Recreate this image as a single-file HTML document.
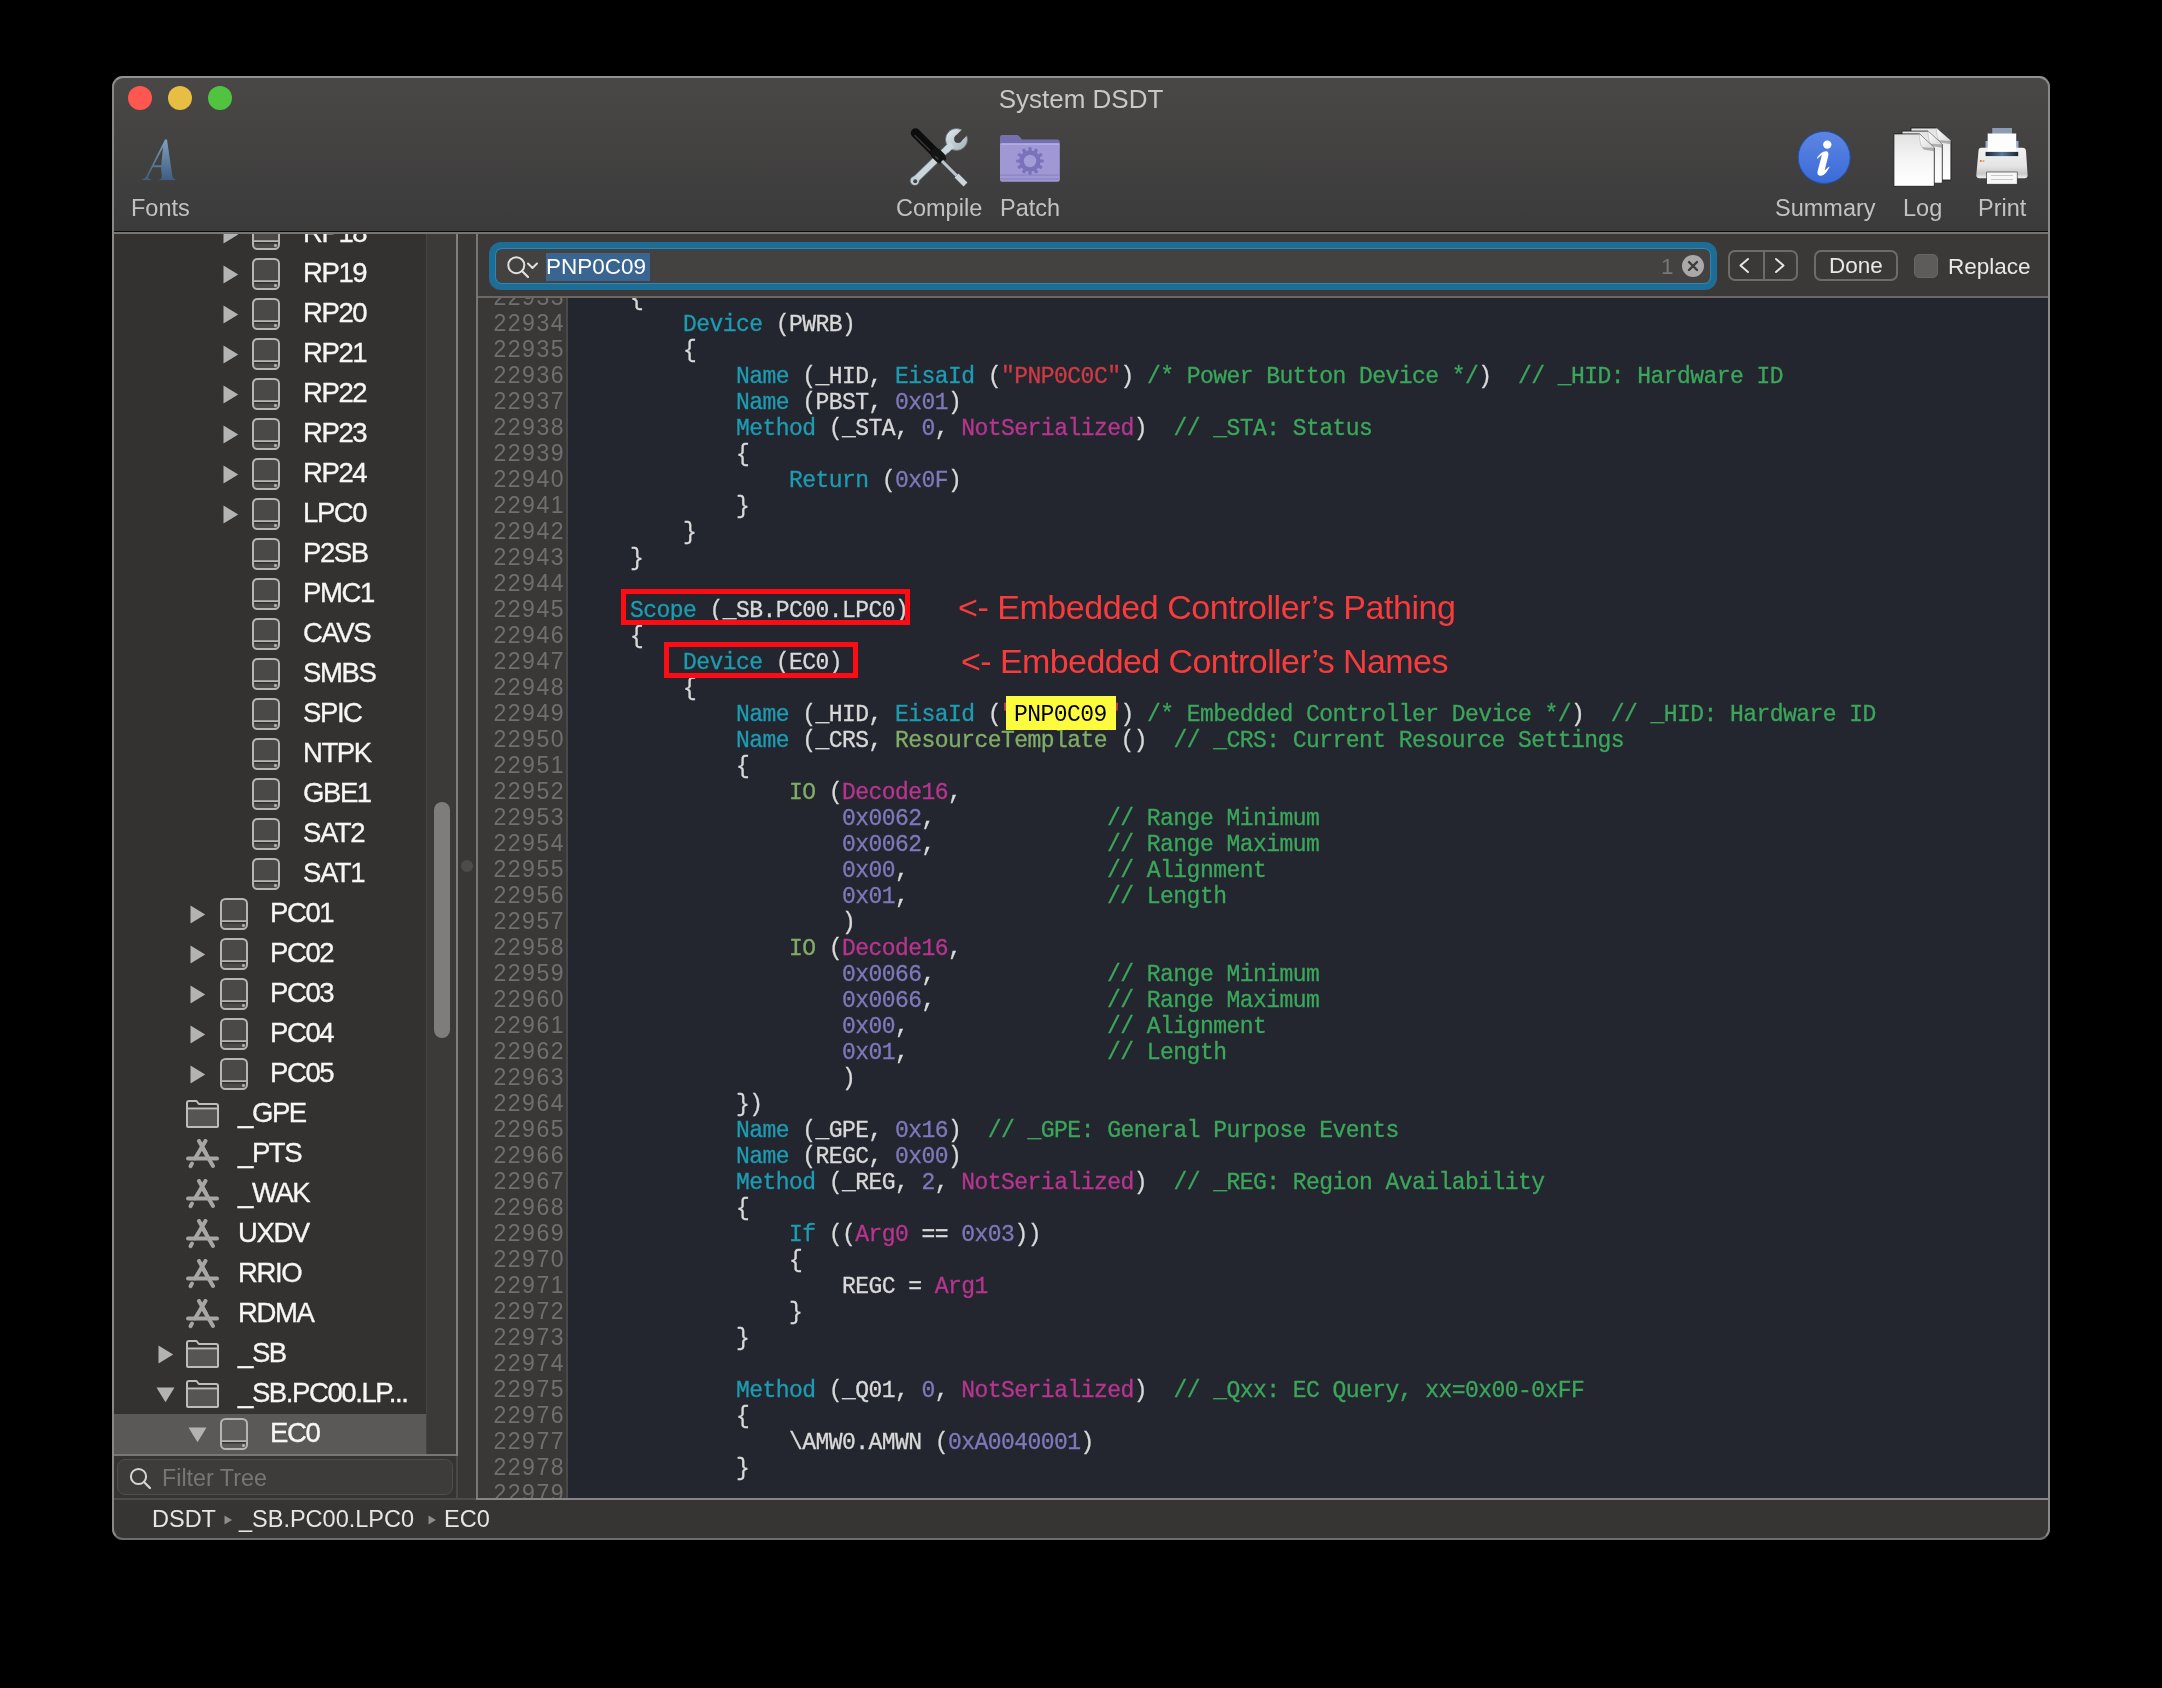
<!DOCTYPE html>
<html><head><meta charset="utf-8">
<style>
*{box-sizing:border-box;margin:0;padding:0}
html,body{width:2162px;height:1688px;background:#000;overflow:hidden;font-family:"Liberation Sans",sans-serif}
#pg{will-change:transform}
.abs{position:absolute}
#win{position:absolute;left:112px;top:76px;width:1938px;height:1464px;border-radius:11px;overflow:hidden;background:#333231}
#pg{position:absolute;left:-112px;top:-76px;width:2162px;height:1688px}
#frame{position:absolute;left:112px;top:76px;width:1938px;height:1464px;border-radius:11px;border:2px solid #888;border-top-color:#929292;border-bottom-color:#6c6c6c;pointer-events:none}
.tl{position:absolute;width:24px;height:24px;border-radius:50%}
.tlabel{position:absolute;color:#c2c2c2;font-size:23.5px;white-space:nowrap;line-height:26px}
.ln{position:absolute;left:1px;width:86px;text-align:right;color:#6f6f6f;font-size:23px;letter-spacing:1.5px;line-height:26px}
.cl{position:absolute;left:9px;white-space:pre;font-family:"Liberation Mono",monospace;font-size:23px;letter-spacing:-0.55px;color:#d9d9d9;line-height:26px;-webkit-text-stroke:0.3px currentColor}
.k{color:#1d9cb2}.g{color:#80ad67}.n{color:#7f78ba}.m{color:#b8358f}.s{color:#cf3b45}.c{color:#3ba75b}
.sbt{position:absolute;color:#f6f6f6;font-size:27.5px;letter-spacing:-1.4px;line-height:30px;white-space:nowrap;-webkit-text-stroke:0.35px #f6f6f6}
</style></head><body>
<div id="win"><div id="pg">
  <!-- toolbar -->
  <div class="abs" style="left:112px;top:76px;width:1938px;height:155px;background:linear-gradient(#494847,#3c3b3b)"></div>
  <div class="abs" style="left:112px;top:231px;width:1938px;height:1px;background:#0a0a0a"></div>
  <div class="tl" style="left:128px;top:86px;background:#fe5750"></div>
  <div class="tl" style="left:168px;top:86px;background:#e8bd43"></div>
  <div class="tl" style="left:208px;top:86px;background:#52c340"></div>
  <div class="abs" style="left:112px;top:84px;width:1938px;text-align:center;color:#c8c8c8;font-size:26px;line-height:30px">System DSDT</div>
  <div class="tlabel" style="left:131px;top:195px">Fonts</div>
  <div class="tlabel" style="left:896px;top:195px">Compile</div>
  <div class="tlabel" style="left:1000px;top:195px">Patch</div>
  <div class="tlabel" style="left:1775px;top:195px">Summary</div>
  <div class="tlabel" style="left:1903px;top:195px">Log</div>
  <div class="tlabel" style="left:1978px;top:195px">Print</div>


  <!-- Fonts icon -->
  <svg class="abs" style="left:138px;top:136px" width="42" height="48" viewBox="0 0 42 48">
    <defs><linearGradient id="ga" x1="0" y1="0" x2="0" y2="1"><stop offset="0" stop-color="#80a0bd"/><stop offset="1" stop-color="#3f5e80"/></linearGradient></defs>
    <g fill="url(#ga)">
<path fill-rule="evenodd" d="M27 3.4 L29 3.4 L34.5 41 Q35.3 43 37.5 43.3 L37.5 44 L21.5 44 L21.5 43.3 Q23.8 43 23.8 41 L23 31.3 L14.8 31.3 L10.2 40.5 Q9.6 43 13 43.3 L13 44 L4 44 L4 43.3 Q6.8 43 8.3 40.5 Z M23.2 29.3 L25 11.2 L15.85 29.3 Z"/>
    </g>
  </svg>
  <!-- Compile icon -->
  <svg class="abs" style="left:900px;top:120px" width="80" height="75" viewBox="0 0 80 75">
    <defs>
      <linearGradient id="gw" x1="0" y1="0" x2="1" y2="1"><stop offset="0" stop-color="#dfeaf0"/><stop offset="1" stop-color="#a3b0b6"/></linearGradient>
      <mask id="jaw" maskUnits="userSpaceOnUse" x="0" y="0" width="80" height="75">
        <rect x="0" y="0" width="80" height="75" fill="#fff"/>
        <polygon points="55.2,16.2 67.5,3.9 73,9.4 60.7,21.7" fill="#000"/>
        <circle cx="58" cy="19" r="3.9" fill="#000"/>
      </mask>
    </defs>
    <line x1="14.5" y1="60.5" x2="49" y2="27" stroke="#5f6d73" stroke-width="7.6" stroke-linecap="round"/>
    <circle cx="14.8" cy="60.8" r="5" fill="#5f6d73"/>
    <line x1="14.5" y1="60.5" x2="49" y2="27" stroke="#c9d6dc" stroke-width="6" stroke-linecap="round"/>
    <circle cx="14.8" cy="60.8" r="4.2" fill="#c3d0d6"/>
    <circle cx="15.2" cy="61.2" r="2" fill="#434242"/>
    <g mask="url(#jaw)">
      <circle cx="56.5" cy="19.5" r="11" fill="url(#gw)" stroke="#5f6d73" stroke-width="0.8"/>
      <polygon points="44,28 50,22 54,27 48,33" fill="#cbd8de"/>
    </g>
    <line x1="15.5" y1="13" x2="35" y2="32.5" stroke="#0d0d0d" stroke-width="9.5" stroke-linecap="round"/>
    <line x1="15" y1="15.5" x2="30" y2="30.5" stroke="#3a3a3a" stroke-width="1.2" stroke-linecap="round"/>
    <line x1="36" y1="33.5" x2="40.5" y2="38" stroke="#141414" stroke-width="11" stroke-linecap="round"/>
    <line x1="35.5" y1="36.5" x2="38" y2="39" stroke="#444" stroke-width="1.2" stroke-linecap="round"/>
    <line x1="42" y1="41" x2="57" y2="56" stroke="#3c4448" stroke-width="4.4"/>
    <line x1="42" y1="41" x2="57" y2="56" stroke="#bcc6ca" stroke-width="3"/>
    <line x1="56.5" y1="55.5" x2="65.5" y2="64.5" stroke="#3c4448" stroke-width="6.8"/>
    <line x1="56.5" y1="55.5" x2="65.5" y2="64.5" stroke="#ccd4d7" stroke-width="5.4"/>
  </svg>
  <!-- Patch icon -->
  <svg class="abs" style="left:990px;top:125px" width="80" height="65" viewBox="0 0 80 65">
    <path d="M10 12 Q10 10 12 10 L27 10 Q28 10 29 11 L32 14.5 L67.5 14.5 Q69.8 14.5 69.8 17 L69.8 22 L10 22 Z" fill="#7770b0"/>
    <rect x="10" y="18.3" width="59.8" height="38.5" rx="2.2" fill="#9f98d4"/>
    <rect x="10.5" y="18.3" width="58.8" height="1.6" fill="#b3ade6"/>
    <rect x="10" y="49.5" width="59.8" height="1.2" fill="#8a83c0"/>
    <rect x="10" y="53.4" width="59.8" height="1.2" fill="#8a83c0"/>
    <g transform="translate(40,36)">
      <g fill="#7a72bb">
        <circle r="10.6"/>
        <rect x="-1.6" y="-13.8" width="3.2" height="27.6" rx="1"/>
        <rect x="-1.6" y="-13.8" width="3.2" height="27.6" rx="1" transform="rotate(30)"/>
        <rect x="-1.6" y="-13.8" width="3.2" height="27.6" rx="1" transform="rotate(60)"/>
        <rect x="-1.6" y="-13.8" width="3.2" height="27.6" rx="1" transform="rotate(90)"/>
        <rect x="-1.6" y="-13.8" width="3.2" height="27.6" rx="1" transform="rotate(120)"/>
        <rect x="-1.6" y="-13.8" width="3.2" height="27.6" rx="1" transform="rotate(150)"/>
      </g>
      <circle r="6.2" fill="#a39dd6"/>
    </g>
  </svg>
  <!-- Summary icon -->
  <svg class="abs" style="left:1790px;top:125px" width="70" height="65" viewBox="0 0 70 65">
    <defs><linearGradient id="gs" x1="0" y1="0" x2="0" y2="1"><stop offset="0" stop-color="#5d86e2"/><stop offset="1" stop-color="#3b6bd8"/></linearGradient></defs>
    <circle cx="34.2" cy="32.4" r="26" fill="url(#gs)" stroke="#1f52c0" stroke-width="1"/>
    <circle cx="37.3" cy="19.6" r="4.2" fill="#fff"/>
    <path d="M26.9 33.1 C29 29.5 32.5 26.2 36 26.2 C38.6 26.2 38.9 28.8 38.1 31.5 L34.6 45.4 C36.5 44 38.5 42 39.6 41.5 C39.2 43.5 34.8 50.8 30.8 50.8 C27.7 50.8 27 48.5 27.7 45.8 L31.9 30 C30.4 30.8 28.5 32.7 27.7 33.8 Z" fill="#fff"/>
  </svg>
  <!-- Log icon -->
  <svg class="abs" style="left:1885px;top:120px" width="70" height="70" viewBox="0 0 70 70">
    <defs><linearGradient id="gp" x1="0" y1="0" x2="0" y2="1"><stop offset="0" stop-color="#e2e2e2"/><stop offset="0.5" stop-color="#f6f6f6"/><stop offset="1" stop-color="#ffffff"/></linearGradient>
    <linearGradient id="gf" x1="0" y1="0" x2="1" y2="1"><stop offset="0" stop-color="#ffffff"/><stop offset="1" stop-color="#d8d8d8"/></linearGradient></defs>
    <path d="M26 8 L51.4 8 L65.9 20.8 L65.9 60 L26 60 Z" fill="url(#gp)" stroke="#151515" stroke-width="0.8"/><path d="M51.9 10 Q52.9 22.3 56.4 22.8 L65.9 24.3 L65.9 20.8 Z" fill="#7a7a7a" opacity="0.55"/><path d="M51.4 8 Q51.699999999999996 18.8 54.4 20.6 Q61.900000000000006 21.400000000000002 65.9 20.8 Z" fill="url(#gf)" stroke="#9a9a9a" stroke-width="0.4"/><path d="M17 11.1 L43 11.1 L57.3 24.3 L57.3 63.2 L17 63.2 Z" fill="url(#gp)" stroke="#151515" stroke-width="0.8"/><path d="M43.5 13.1 Q44.5 25.8 48 26.3 L57.3 27.8 L57.3 24.3 Z" fill="#7a7a7a" opacity="0.55"/><path d="M43 11.1 Q43.3 22.3 46 24.1 Q53.3 24.900000000000002 57.3 24.3 Z" fill="url(#gf)" stroke="#9a9a9a" stroke-width="0.4"/><path d="M8.9 13.9 L34.5 13.9 L49.3 27.8 L49.3 66.3 L8.9 66.3 Z" fill="url(#gp)" stroke="#151515" stroke-width="0.8"/><path d="M35.0 15.9 Q36.0 29.3 39.5 29.8 L49.3 31.3 L49.3 27.8 Z" fill="#7a7a7a" opacity="0.55"/><path d="M34.5 13.9 Q34.8 25.8 37.5 27.6 Q45.3 28.400000000000002 49.3 27.8 Z" fill="url(#gf)" stroke="#9a9a9a" stroke-width="0.4"/>
  </svg>
  <!-- Print icon -->
  <svg class="abs" style="left:1885px;top:120px" width="150" height="70" viewBox="0 0 150 70">
    <defs>
      <linearGradient id="gb" x1="0" y1="0" x2="0" y2="1"><stop offset="0" stop-color="#f2f2f2"/><stop offset="0.6" stop-color="#e4e4e4"/><stop offset="0.85" stop-color="#c8c8c8"/><stop offset="1" stop-color="#f0f0f0"/></linearGradient>
      <linearGradient id="gsl" x1="0" y1="0" x2="1" y2="0"><stop offset="0" stop-color="#1b2433"/><stop offset="0.5" stop-color="#5a7898"/><stop offset="1" stop-color="#1b2433"/></linearGradient>
    </defs>
    <rect x="107.2" y="8" width="19.8" height="6" fill="#8b9bb4"/>
    <rect x="100.5" y="21" width="33" height="12" fill="#9aa9c0"/>
    <path d="M93.5 31 Q93.5 27.8 96.5 27.8 L137.5 27.8 Q140.6 27.8 141 31 L142.6 55 Q142.6 58.3 139.5 58.3 L94.5 58.3 Q91.3 58.3 91.3 55 Z" fill="url(#gb)"/>
    <rect x="102.7" y="13.5" width="28.5" height="18.4" fill="#fdfdfd"/>
    <rect x="100.6" y="31.9" width="32.6" height="4.2" fill="url(#gsl)"/>
    <rect x="101.7" y="52" width="30.5" height="12.2" fill="#f7f7f7" stroke="#222" stroke-width="0.6"/>
    <rect x="106" y="55" width="22" height="1" fill="#c8c8c8"/>
    <rect x="106" y="59" width="22" height="1" fill="#c8c8c8"/>
    <circle cx="95.8" cy="41" r="1" fill="#ee5a3a"/>
    <circle cx="98.5" cy="41" r="1" fill="#eea03a"/>
  </svg>

  <!-- top light line below toolbar -->
  <div class="abs" style="left:112px;top:232px;width:1938px;height:2px;background:#767574"></div>

  <!-- sidebar -->
  <div class="abs" style="left:114px;top:234px;width:342px;height:1221px;background:#333231;overflow:hidden">
    <div class="abs" style="left:312px;top:0;width:30px;height:1221px;background:#3b3a39;border-left:1px solid #454443"></div>
    <div class="abs" style="left:320px;top:568px;width:16px;height:236px;border-radius:8px;background:#7e7d7c"></div>
    <div class="abs" style="left:109px;top:-9px"><svg width="16" height="19" viewBox="0 0 16 19"><path d="M0.5 0.5 L15.2 9.5 L0.5 18.5Z" fill="#b3b3b3"/></svg></div>
<div class="abs" style="left:138px;top:-16px;height:32px"><svg width="28" height="32" viewBox="0 0 28 32"><rect x="1" y="1" width="26" height="30" rx="4.5" fill="#4a4948" stroke="#b5b5b5" stroke-width="2"/><rect x="2.5" y="24.5" width="23" height="5" rx="2" fill="#4b4a49"/><line x1="2" y1="23.2" x2="26" y2="23.2" stroke="#b5b5b5" stroke-width="2"/><line x1="2" y1="24.8" x2="26" y2="24.8" stroke="#262626" stroke-width="1.2"/><rect x="22.3" y="26.3" width="2.4" height="2.4" fill="#c8c8c8"/></svg></div>
<div class="sbt" style="left:189px;top:-16px">RP18</div>
<div class="abs" style="left:109px;top:31px"><svg width="16" height="19" viewBox="0 0 16 19"><path d="M0.5 0.5 L15.2 9.5 L0.5 18.5Z" fill="#b3b3b3"/></svg></div>
<div class="abs" style="left:138px;top:24px;height:32px"><svg width="28" height="32" viewBox="0 0 28 32"><rect x="1" y="1" width="26" height="30" rx="4.5" fill="#4a4948" stroke="#b5b5b5" stroke-width="2"/><rect x="2.5" y="24.5" width="23" height="5" rx="2" fill="#4b4a49"/><line x1="2" y1="23.2" x2="26" y2="23.2" stroke="#b5b5b5" stroke-width="2"/><line x1="2" y1="24.8" x2="26" y2="24.8" stroke="#262626" stroke-width="1.2"/><rect x="22.3" y="26.3" width="2.4" height="2.4" fill="#c8c8c8"/></svg></div>
<div class="sbt" style="left:189px;top:24px">RP19</div>
<div class="abs" style="left:109px;top:71px"><svg width="16" height="19" viewBox="0 0 16 19"><path d="M0.5 0.5 L15.2 9.5 L0.5 18.5Z" fill="#b3b3b3"/></svg></div>
<div class="abs" style="left:138px;top:64px;height:32px"><svg width="28" height="32" viewBox="0 0 28 32"><rect x="1" y="1" width="26" height="30" rx="4.5" fill="#4a4948" stroke="#b5b5b5" stroke-width="2"/><rect x="2.5" y="24.5" width="23" height="5" rx="2" fill="#4b4a49"/><line x1="2" y1="23.2" x2="26" y2="23.2" stroke="#b5b5b5" stroke-width="2"/><line x1="2" y1="24.8" x2="26" y2="24.8" stroke="#262626" stroke-width="1.2"/><rect x="22.3" y="26.3" width="2.4" height="2.4" fill="#c8c8c8"/></svg></div>
<div class="sbt" style="left:189px;top:64px">RP20</div>
<div class="abs" style="left:109px;top:111px"><svg width="16" height="19" viewBox="0 0 16 19"><path d="M0.5 0.5 L15.2 9.5 L0.5 18.5Z" fill="#b3b3b3"/></svg></div>
<div class="abs" style="left:138px;top:104px;height:32px"><svg width="28" height="32" viewBox="0 0 28 32"><rect x="1" y="1" width="26" height="30" rx="4.5" fill="#4a4948" stroke="#b5b5b5" stroke-width="2"/><rect x="2.5" y="24.5" width="23" height="5" rx="2" fill="#4b4a49"/><line x1="2" y1="23.2" x2="26" y2="23.2" stroke="#b5b5b5" stroke-width="2"/><line x1="2" y1="24.8" x2="26" y2="24.8" stroke="#262626" stroke-width="1.2"/><rect x="22.3" y="26.3" width="2.4" height="2.4" fill="#c8c8c8"/></svg></div>
<div class="sbt" style="left:189px;top:104px">RP21</div>
<div class="abs" style="left:109px;top:151px"><svg width="16" height="19" viewBox="0 0 16 19"><path d="M0.5 0.5 L15.2 9.5 L0.5 18.5Z" fill="#b3b3b3"/></svg></div>
<div class="abs" style="left:138px;top:144px;height:32px"><svg width="28" height="32" viewBox="0 0 28 32"><rect x="1" y="1" width="26" height="30" rx="4.5" fill="#4a4948" stroke="#b5b5b5" stroke-width="2"/><rect x="2.5" y="24.5" width="23" height="5" rx="2" fill="#4b4a49"/><line x1="2" y1="23.2" x2="26" y2="23.2" stroke="#b5b5b5" stroke-width="2"/><line x1="2" y1="24.8" x2="26" y2="24.8" stroke="#262626" stroke-width="1.2"/><rect x="22.3" y="26.3" width="2.4" height="2.4" fill="#c8c8c8"/></svg></div>
<div class="sbt" style="left:189px;top:144px">RP22</div>
<div class="abs" style="left:109px;top:191px"><svg width="16" height="19" viewBox="0 0 16 19"><path d="M0.5 0.5 L15.2 9.5 L0.5 18.5Z" fill="#b3b3b3"/></svg></div>
<div class="abs" style="left:138px;top:184px;height:32px"><svg width="28" height="32" viewBox="0 0 28 32"><rect x="1" y="1" width="26" height="30" rx="4.5" fill="#4a4948" stroke="#b5b5b5" stroke-width="2"/><rect x="2.5" y="24.5" width="23" height="5" rx="2" fill="#4b4a49"/><line x1="2" y1="23.2" x2="26" y2="23.2" stroke="#b5b5b5" stroke-width="2"/><line x1="2" y1="24.8" x2="26" y2="24.8" stroke="#262626" stroke-width="1.2"/><rect x="22.3" y="26.3" width="2.4" height="2.4" fill="#c8c8c8"/></svg></div>
<div class="sbt" style="left:189px;top:184px">RP23</div>
<div class="abs" style="left:109px;top:231px"><svg width="16" height="19" viewBox="0 0 16 19"><path d="M0.5 0.5 L15.2 9.5 L0.5 18.5Z" fill="#b3b3b3"/></svg></div>
<div class="abs" style="left:138px;top:224px;height:32px"><svg width="28" height="32" viewBox="0 0 28 32"><rect x="1" y="1" width="26" height="30" rx="4.5" fill="#4a4948" stroke="#b5b5b5" stroke-width="2"/><rect x="2.5" y="24.5" width="23" height="5" rx="2" fill="#4b4a49"/><line x1="2" y1="23.2" x2="26" y2="23.2" stroke="#b5b5b5" stroke-width="2"/><line x1="2" y1="24.8" x2="26" y2="24.8" stroke="#262626" stroke-width="1.2"/><rect x="22.3" y="26.3" width="2.4" height="2.4" fill="#c8c8c8"/></svg></div>
<div class="sbt" style="left:189px;top:224px">RP24</div>
<div class="abs" style="left:109px;top:271px"><svg width="16" height="19" viewBox="0 0 16 19"><path d="M0.5 0.5 L15.2 9.5 L0.5 18.5Z" fill="#b3b3b3"/></svg></div>
<div class="abs" style="left:138px;top:264px;height:32px"><svg width="28" height="32" viewBox="0 0 28 32"><rect x="1" y="1" width="26" height="30" rx="4.5" fill="#4a4948" stroke="#b5b5b5" stroke-width="2"/><rect x="2.5" y="24.5" width="23" height="5" rx="2" fill="#4b4a49"/><line x1="2" y1="23.2" x2="26" y2="23.2" stroke="#b5b5b5" stroke-width="2"/><line x1="2" y1="24.8" x2="26" y2="24.8" stroke="#262626" stroke-width="1.2"/><rect x="22.3" y="26.3" width="2.4" height="2.4" fill="#c8c8c8"/></svg></div>
<div class="sbt" style="left:189px;top:264px">LPC0</div>
<div class="abs" style="left:138px;top:304px;height:32px"><svg width="28" height="32" viewBox="0 0 28 32"><rect x="1" y="1" width="26" height="30" rx="4.5" fill="#4a4948" stroke="#b5b5b5" stroke-width="2"/><rect x="2.5" y="24.5" width="23" height="5" rx="2" fill="#4b4a49"/><line x1="2" y1="23.2" x2="26" y2="23.2" stroke="#b5b5b5" stroke-width="2"/><line x1="2" y1="24.8" x2="26" y2="24.8" stroke="#262626" stroke-width="1.2"/><rect x="22.3" y="26.3" width="2.4" height="2.4" fill="#c8c8c8"/></svg></div>
<div class="sbt" style="left:189px;top:304px">P2SB</div>
<div class="abs" style="left:138px;top:344px;height:32px"><svg width="28" height="32" viewBox="0 0 28 32"><rect x="1" y="1" width="26" height="30" rx="4.5" fill="#4a4948" stroke="#b5b5b5" stroke-width="2"/><rect x="2.5" y="24.5" width="23" height="5" rx="2" fill="#4b4a49"/><line x1="2" y1="23.2" x2="26" y2="23.2" stroke="#b5b5b5" stroke-width="2"/><line x1="2" y1="24.8" x2="26" y2="24.8" stroke="#262626" stroke-width="1.2"/><rect x="22.3" y="26.3" width="2.4" height="2.4" fill="#c8c8c8"/></svg></div>
<div class="sbt" style="left:189px;top:344px">PMC1</div>
<div class="abs" style="left:138px;top:384px;height:32px"><svg width="28" height="32" viewBox="0 0 28 32"><rect x="1" y="1" width="26" height="30" rx="4.5" fill="#4a4948" stroke="#b5b5b5" stroke-width="2"/><rect x="2.5" y="24.5" width="23" height="5" rx="2" fill="#4b4a49"/><line x1="2" y1="23.2" x2="26" y2="23.2" stroke="#b5b5b5" stroke-width="2"/><line x1="2" y1="24.8" x2="26" y2="24.8" stroke="#262626" stroke-width="1.2"/><rect x="22.3" y="26.3" width="2.4" height="2.4" fill="#c8c8c8"/></svg></div>
<div class="sbt" style="left:189px;top:384px">CAVS</div>
<div class="abs" style="left:138px;top:424px;height:32px"><svg width="28" height="32" viewBox="0 0 28 32"><rect x="1" y="1" width="26" height="30" rx="4.5" fill="#4a4948" stroke="#b5b5b5" stroke-width="2"/><rect x="2.5" y="24.5" width="23" height="5" rx="2" fill="#4b4a49"/><line x1="2" y1="23.2" x2="26" y2="23.2" stroke="#b5b5b5" stroke-width="2"/><line x1="2" y1="24.8" x2="26" y2="24.8" stroke="#262626" stroke-width="1.2"/><rect x="22.3" y="26.3" width="2.4" height="2.4" fill="#c8c8c8"/></svg></div>
<div class="sbt" style="left:189px;top:424px">SMBS</div>
<div class="abs" style="left:138px;top:464px;height:32px"><svg width="28" height="32" viewBox="0 0 28 32"><rect x="1" y="1" width="26" height="30" rx="4.5" fill="#4a4948" stroke="#b5b5b5" stroke-width="2"/><rect x="2.5" y="24.5" width="23" height="5" rx="2" fill="#4b4a49"/><line x1="2" y1="23.2" x2="26" y2="23.2" stroke="#b5b5b5" stroke-width="2"/><line x1="2" y1="24.8" x2="26" y2="24.8" stroke="#262626" stroke-width="1.2"/><rect x="22.3" y="26.3" width="2.4" height="2.4" fill="#c8c8c8"/></svg></div>
<div class="sbt" style="left:189px;top:464px">SPIC</div>
<div class="abs" style="left:138px;top:504px;height:32px"><svg width="28" height="32" viewBox="0 0 28 32"><rect x="1" y="1" width="26" height="30" rx="4.5" fill="#4a4948" stroke="#b5b5b5" stroke-width="2"/><rect x="2.5" y="24.5" width="23" height="5" rx="2" fill="#4b4a49"/><line x1="2" y1="23.2" x2="26" y2="23.2" stroke="#b5b5b5" stroke-width="2"/><line x1="2" y1="24.8" x2="26" y2="24.8" stroke="#262626" stroke-width="1.2"/><rect x="22.3" y="26.3" width="2.4" height="2.4" fill="#c8c8c8"/></svg></div>
<div class="sbt" style="left:189px;top:504px">NTPK</div>
<div class="abs" style="left:138px;top:544px;height:32px"><svg width="28" height="32" viewBox="0 0 28 32"><rect x="1" y="1" width="26" height="30" rx="4.5" fill="#4a4948" stroke="#b5b5b5" stroke-width="2"/><rect x="2.5" y="24.5" width="23" height="5" rx="2" fill="#4b4a49"/><line x1="2" y1="23.2" x2="26" y2="23.2" stroke="#b5b5b5" stroke-width="2"/><line x1="2" y1="24.8" x2="26" y2="24.8" stroke="#262626" stroke-width="1.2"/><rect x="22.3" y="26.3" width="2.4" height="2.4" fill="#c8c8c8"/></svg></div>
<div class="sbt" style="left:189px;top:544px">GBE1</div>
<div class="abs" style="left:138px;top:584px;height:32px"><svg width="28" height="32" viewBox="0 0 28 32"><rect x="1" y="1" width="26" height="30" rx="4.5" fill="#4a4948" stroke="#b5b5b5" stroke-width="2"/><rect x="2.5" y="24.5" width="23" height="5" rx="2" fill="#4b4a49"/><line x1="2" y1="23.2" x2="26" y2="23.2" stroke="#b5b5b5" stroke-width="2"/><line x1="2" y1="24.8" x2="26" y2="24.8" stroke="#262626" stroke-width="1.2"/><rect x="22.3" y="26.3" width="2.4" height="2.4" fill="#c8c8c8"/></svg></div>
<div class="sbt" style="left:189px;top:584px">SAT2</div>
<div class="abs" style="left:138px;top:624px;height:32px"><svg width="28" height="32" viewBox="0 0 28 32"><rect x="1" y="1" width="26" height="30" rx="4.5" fill="#4a4948" stroke="#b5b5b5" stroke-width="2"/><rect x="2.5" y="24.5" width="23" height="5" rx="2" fill="#4b4a49"/><line x1="2" y1="23.2" x2="26" y2="23.2" stroke="#b5b5b5" stroke-width="2"/><line x1="2" y1="24.8" x2="26" y2="24.8" stroke="#262626" stroke-width="1.2"/><rect x="22.3" y="26.3" width="2.4" height="2.4" fill="#c8c8c8"/></svg></div>
<div class="sbt" style="left:189px;top:624px">SAT1</div>
<div class="abs" style="left:76px;top:671px"><svg width="16" height="19" viewBox="0 0 16 19"><path d="M0.5 0.5 L15.2 9.5 L0.5 18.5Z" fill="#b3b3b3"/></svg></div>
<div class="abs" style="left:106px;top:664px;height:32px"><svg width="28" height="32" viewBox="0 0 28 32"><rect x="1" y="1" width="26" height="30" rx="4.5" fill="#4a4948" stroke="#b5b5b5" stroke-width="2"/><rect x="2.5" y="24.5" width="23" height="5" rx="2" fill="#4b4a49"/><line x1="2" y1="23.2" x2="26" y2="23.2" stroke="#b5b5b5" stroke-width="2"/><line x1="2" y1="24.8" x2="26" y2="24.8" stroke="#262626" stroke-width="1.2"/><rect x="22.3" y="26.3" width="2.4" height="2.4" fill="#c8c8c8"/></svg></div>
<div class="sbt" style="left:156px;top:664px">PC01</div>
<div class="abs" style="left:76px;top:711px"><svg width="16" height="19" viewBox="0 0 16 19"><path d="M0.5 0.5 L15.2 9.5 L0.5 18.5Z" fill="#b3b3b3"/></svg></div>
<div class="abs" style="left:106px;top:704px;height:32px"><svg width="28" height="32" viewBox="0 0 28 32"><rect x="1" y="1" width="26" height="30" rx="4.5" fill="#4a4948" stroke="#b5b5b5" stroke-width="2"/><rect x="2.5" y="24.5" width="23" height="5" rx="2" fill="#4b4a49"/><line x1="2" y1="23.2" x2="26" y2="23.2" stroke="#b5b5b5" stroke-width="2"/><line x1="2" y1="24.8" x2="26" y2="24.8" stroke="#262626" stroke-width="1.2"/><rect x="22.3" y="26.3" width="2.4" height="2.4" fill="#c8c8c8"/></svg></div>
<div class="sbt" style="left:156px;top:704px">PC02</div>
<div class="abs" style="left:76px;top:751px"><svg width="16" height="19" viewBox="0 0 16 19"><path d="M0.5 0.5 L15.2 9.5 L0.5 18.5Z" fill="#b3b3b3"/></svg></div>
<div class="abs" style="left:106px;top:744px;height:32px"><svg width="28" height="32" viewBox="0 0 28 32"><rect x="1" y="1" width="26" height="30" rx="4.5" fill="#4a4948" stroke="#b5b5b5" stroke-width="2"/><rect x="2.5" y="24.5" width="23" height="5" rx="2" fill="#4b4a49"/><line x1="2" y1="23.2" x2="26" y2="23.2" stroke="#b5b5b5" stroke-width="2"/><line x1="2" y1="24.8" x2="26" y2="24.8" stroke="#262626" stroke-width="1.2"/><rect x="22.3" y="26.3" width="2.4" height="2.4" fill="#c8c8c8"/></svg></div>
<div class="sbt" style="left:156px;top:744px">PC03</div>
<div class="abs" style="left:76px;top:791px"><svg width="16" height="19" viewBox="0 0 16 19"><path d="M0.5 0.5 L15.2 9.5 L0.5 18.5Z" fill="#b3b3b3"/></svg></div>
<div class="abs" style="left:106px;top:784px;height:32px"><svg width="28" height="32" viewBox="0 0 28 32"><rect x="1" y="1" width="26" height="30" rx="4.5" fill="#4a4948" stroke="#b5b5b5" stroke-width="2"/><rect x="2.5" y="24.5" width="23" height="5" rx="2" fill="#4b4a49"/><line x1="2" y1="23.2" x2="26" y2="23.2" stroke="#b5b5b5" stroke-width="2"/><line x1="2" y1="24.8" x2="26" y2="24.8" stroke="#262626" stroke-width="1.2"/><rect x="22.3" y="26.3" width="2.4" height="2.4" fill="#c8c8c8"/></svg></div>
<div class="sbt" style="left:156px;top:784px">PC04</div>
<div class="abs" style="left:76px;top:831px"><svg width="16" height="19" viewBox="0 0 16 19"><path d="M0.5 0.5 L15.2 9.5 L0.5 18.5Z" fill="#b3b3b3"/></svg></div>
<div class="abs" style="left:106px;top:824px;height:32px"><svg width="28" height="32" viewBox="0 0 28 32"><rect x="1" y="1" width="26" height="30" rx="4.5" fill="#4a4948" stroke="#b5b5b5" stroke-width="2"/><rect x="2.5" y="24.5" width="23" height="5" rx="2" fill="#4b4a49"/><line x1="2" y1="23.2" x2="26" y2="23.2" stroke="#b5b5b5" stroke-width="2"/><line x1="2" y1="24.8" x2="26" y2="24.8" stroke="#262626" stroke-width="1.2"/><rect x="22.3" y="26.3" width="2.4" height="2.4" fill="#c8c8c8"/></svg></div>
<div class="sbt" style="left:156px;top:824px">PC05</div>
<div class="abs" style="left:72px;top:866px;height:28px"><svg width="33" height="28" viewBox="0 0 33 28"><path d="M1 26 V3 Q1 1 3 1 H9.8 Q10.8 1 11.4 2 L12.8 4 H30 Q32 4 32 6 V26 Q32 27 31 27 H2 Q1 27 1 26Z" fill="#333231" stroke="#bdbdbd" stroke-width="2" stroke-linejoin="round"/><rect x="2" y="9.5" width="29" height="16.5" fill="#565554"/><line x1="1.5" y1="8.5" x2="31.5" y2="8.5" stroke="#bdbdbd" stroke-width="2"/></svg></div>
<div class="sbt" style="left:124px;top:864px">_GPE</div>
<div class="abs" style="left:72px;top:905px;height:30px"><svg width="33" height="30" viewBox="0 0 33 30"><g stroke="#a6a6a6" stroke-width="4" stroke-linecap="round" fill="none"><line x1="13" y1="2" x2="20" y2="14.5"/><line x1="19.5" y1="2" x2="9" y2="19.5"/><line x1="17.2" y1="10" x2="27" y2="27"/><line x1="2" y1="19.5" x2="31" y2="19.5"/><line x1="6" y1="24.5" x2="4.5" y2="27.2"/></g></svg></div>
<div class="sbt" style="left:124px;top:904px">_PTS</div>
<div class="abs" style="left:72px;top:945px;height:30px"><svg width="33" height="30" viewBox="0 0 33 30"><g stroke="#a6a6a6" stroke-width="4" stroke-linecap="round" fill="none"><line x1="13" y1="2" x2="20" y2="14.5"/><line x1="19.5" y1="2" x2="9" y2="19.5"/><line x1="17.2" y1="10" x2="27" y2="27"/><line x1="2" y1="19.5" x2="31" y2="19.5"/><line x1="6" y1="24.5" x2="4.5" y2="27.2"/></g></svg></div>
<div class="sbt" style="left:124px;top:944px">_WAK</div>
<div class="abs" style="left:72px;top:985px;height:30px"><svg width="33" height="30" viewBox="0 0 33 30"><g stroke="#a6a6a6" stroke-width="4" stroke-linecap="round" fill="none"><line x1="13" y1="2" x2="20" y2="14.5"/><line x1="19.5" y1="2" x2="9" y2="19.5"/><line x1="17.2" y1="10" x2="27" y2="27"/><line x1="2" y1="19.5" x2="31" y2="19.5"/><line x1="6" y1="24.5" x2="4.5" y2="27.2"/></g></svg></div>
<div class="sbt" style="left:124px;top:984px">UXDV</div>
<div class="abs" style="left:72px;top:1025px;height:30px"><svg width="33" height="30" viewBox="0 0 33 30"><g stroke="#a6a6a6" stroke-width="4" stroke-linecap="round" fill="none"><line x1="13" y1="2" x2="20" y2="14.5"/><line x1="19.5" y1="2" x2="9" y2="19.5"/><line x1="17.2" y1="10" x2="27" y2="27"/><line x1="2" y1="19.5" x2="31" y2="19.5"/><line x1="6" y1="24.5" x2="4.5" y2="27.2"/></g></svg></div>
<div class="sbt" style="left:124px;top:1024px">RRIO</div>
<div class="abs" style="left:72px;top:1065px;height:30px"><svg width="33" height="30" viewBox="0 0 33 30"><g stroke="#a6a6a6" stroke-width="4" stroke-linecap="round" fill="none"><line x1="13" y1="2" x2="20" y2="14.5"/><line x1="19.5" y1="2" x2="9" y2="19.5"/><line x1="17.2" y1="10" x2="27" y2="27"/><line x1="2" y1="19.5" x2="31" y2="19.5"/><line x1="6" y1="24.5" x2="4.5" y2="27.2"/></g></svg></div>
<div class="sbt" style="left:124px;top:1064px">RDMA</div>
<div class="abs" style="left:44px;top:1111px"><svg width="16" height="19" viewBox="0 0 16 19"><path d="M0.5 0.5 L15.2 9.5 L0.5 18.5Z" fill="#b3b3b3"/></svg></div>
<div class="abs" style="left:72px;top:1106px;height:28px"><svg width="33" height="28" viewBox="0 0 33 28"><path d="M1 26 V3 Q1 1 3 1 H9.8 Q10.8 1 11.4 2 L12.8 4 H30 Q32 4 32 6 V26 Q32 27 31 27 H2 Q1 27 1 26Z" fill="#333231" stroke="#bdbdbd" stroke-width="2" stroke-linejoin="round"/><rect x="2" y="9.5" width="29" height="16.5" fill="#565554"/><line x1="1.5" y1="8.5" x2="31.5" y2="8.5" stroke="#bdbdbd" stroke-width="2"/></svg></div>
<div class="sbt" style="left:124px;top:1104px">_SB</div>
<div class="abs" style="left:42px;top:1153px"><svg width="19" height="16" viewBox="0 0 19 16"><path d="M0.5 0.5 L18.5 0.5 L9.5 15.2Z" fill="#b3b3b3"/></svg></div>
<div class="abs" style="left:72px;top:1146px;height:28px"><svg width="33" height="28" viewBox="0 0 33 28"><path d="M1 26 V3 Q1 1 3 1 H9.8 Q10.8 1 11.4 2 L12.8 4 H30 Q32 4 32 6 V26 Q32 27 31 27 H2 Q1 27 1 26Z" fill="#333231" stroke="#bdbdbd" stroke-width="2" stroke-linejoin="round"/><rect x="2" y="9.5" width="29" height="16.5" fill="#565554"/><line x1="1.5" y1="8.5" x2="31.5" y2="8.5" stroke="#bdbdbd" stroke-width="2"/></svg></div>
<div class="sbt" style="left:124px;top:1144px">_SB.PC00.LP...</div>
<div class="abs" style="left:0;top:1180px;width:312px;height:40px;background:#5a5958"></div>
<div class="abs" style="left:74px;top:1193px"><svg width="19" height="16" viewBox="0 0 19 16"><path d="M0.5 0.5 L18.5 0.5 L9.5 15.2Z" fill="#b3b3b3"/></svg></div>
<div class="abs" style="left:106px;top:1184px;height:32px"><svg width="28" height="32" viewBox="0 0 28 32"><rect x="1" y="1" width="26" height="30" rx="4.5" fill="#5f5e5d" stroke="#b5b5b5" stroke-width="2"/><rect x="2.5" y="24.5" width="23" height="5" rx="2" fill="#5c5b5a"/><line x1="2" y1="23.2" x2="26" y2="23.2" stroke="#b5b5b5" stroke-width="2"/><line x1="2" y1="24.8" x2="26" y2="24.8" stroke="#262626" stroke-width="1.2"/><rect x="22.3" y="26.3" width="2.4" height="2.4" fill="#c8c8c8"/></svg></div>
<div class="sbt" style="left:156px;top:1184px">EC0</div>
  </div>
  <!-- sidebar bottom filter area -->
  <div class="abs" style="left:114px;top:1456px;width:342px;height:42px;background:#363433"></div>
  <div class="abs" style="left:112px;top:1454px;width:346px;height:2px;background:#787776"></div>
  <div class="abs" style="left:117px;top:1459px;width:336px;height:36px;border-radius:8px;background:#3d3c3b;border:1px solid #4f4e4d"></div>
  <div class="abs" style="left:162px;top:1463px;color:#777675;font-size:23.3px;line-height:30px">Filter Tree</div>
  <svg class="abs" style="left:128px;top:1466px" width="26" height="26" viewBox="0 0 26 26"><circle cx="10.5" cy="10.5" r="7.6" fill="none" stroke="#d6d6d6" stroke-width="2"/><line x1="16" y1="16" x2="22" y2="22" stroke="#d6d6d6" stroke-width="2.2" stroke-linecap="round"/></svg>

  <!-- divider -->
  <div class="abs" style="left:456px;top:234px;width:2px;height:1222px;background:#7f7f7f"></div>
  <div class="abs" style="left:456px;top:1456px;width:2px;height:42px;background:#4a4948"></div>
  <div class="abs" style="left:458px;top:234px;width:18px;height:1264px;background:#383736"></div>
  <div class="abs" style="left:461px;top:860px;width:12px;height:12px;border-radius:50%;background:#4d4c4b"></div>
  <div class="abs" style="left:476px;top:234px;width:2px;height:1266px;background:#777"></div>

  <!-- search bar -->
  <div class="abs" style="left:478px;top:234px;width:1570px;height:62px;background:#3a3938"></div>
  <div class="abs" style="left:478px;top:296px;width:1570px;height:2px;background:#696867"></div>


  <!-- search field -->
  <div class="abs" style="left:489px;top:242px;width:1228px;height:48px;border-radius:12px;background:#1d6d97"></div>
  <div class="abs" style="left:495px;top:248px;width:1216px;height:36px;border-radius:7px;background:#2a87b6"></div>
  <div class="abs" style="left:496px;top:249px;width:1214px;height:34px;border-radius:6px;background:#434241"></div>
  <svg class="abs" style="left:505px;top:254px" width="36" height="26" viewBox="0 0 36 26">
    <circle cx="11.3" cy="11.2" r="8" fill="none" stroke="#e0e0e0" stroke-width="2"/>
    <line x1="17" y1="17" x2="23" y2="23" stroke="#e0e0e0" stroke-width="2.2" stroke-linecap="round"/>
    <polyline points="23,9.5 27.5,14 32,9.5" fill="none" stroke="#e0e0e0" stroke-width="2" stroke-linecap="round" stroke-linejoin="round"/>
  </svg>
  <div class="abs" style="left:546px;top:253px;width:104px;height:28px;background:#3a6590"></div>
  <div class="abs" style="left:546px;top:252px;color:#ffffff;font-size:22.5px;line-height:30px;white-space:nowrap">PNP0C09</div>
  <div class="abs" style="left:1661px;top:252px;color:#777;font-size:22.5px;line-height:30px">1</div>
  <div class="abs" style="left:1682px;top:255px;width:22px;height:22px;border-radius:50%;background:#a9a9a9"></div>
  <svg class="abs" style="left:1682px;top:255px" width="22" height="22" viewBox="0 0 22 22"><path d="M7 7 L15 15 M15 7 L7 15" stroke="#3c3b3a" stroke-width="2.4" stroke-linecap="round"/></svg>
  <!-- prev/next -->
  <div class="abs" style="left:1728px;top:250px;width:70px;height:31px;border-radius:7px;border:2px solid #6d6c6b"></div>
  <div class="abs" style="left:1763px;top:251px;width:2px;height:29px;background:#6d6c6b"></div>
  <svg class="abs" style="left:1728px;top:250px" width="70" height="31" viewBox="0 0 70 31">
    <polyline points="20,9 12.5,15.5 20,22" fill="none" stroke="#e6e6e6" stroke-width="2" stroke-linecap="round" stroke-linejoin="round"/>
    <polyline points="48,9 55.5,15.5 48,22" fill="none" stroke="#e6e6e6" stroke-width="2" stroke-linecap="round" stroke-linejoin="round"/>
  </svg>
  <div class="abs" style="left:1814px;top:250px;width:84px;height:31px;border-radius:7px;border:2px solid #6d6c6b"></div>
  <div class="abs" style="left:1814px;top:251px;width:84px;text-align:center;color:#e8e8e8;font-size:22.5px;line-height:30px">Done</div>
  <div class="abs" style="left:1914px;top:254px;width:24px;height:24px;border-radius:5px;background:#5d5c5b;border:1px solid #666"></div>
  <div class="abs" style="left:1948px;top:252px;color:#e8e8e8;font-size:22.5px;line-height:30px">Replace</div>

  <!-- code -->
  <div class="abs" style="left:478px;top:298px;width:88px;height:1200px;background:#393837;overflow:hidden">
    <div class="ln" style="top:-14px">22933</div>
<div class="ln" style="top:12px">22934</div>
<div class="ln" style="top:38px">22935</div>
<div class="ln" style="top:64px">22936</div>
<div class="ln" style="top:90px">22937</div>
<div class="ln" style="top:116px">22938</div>
<div class="ln" style="top:142px">22939</div>
<div class="ln" style="top:168px">22940</div>
<div class="ln" style="top:194px">22941</div>
<div class="ln" style="top:220px">22942</div>
<div class="ln" style="top:246px">22943</div>
<div class="ln" style="top:272px">22944</div>
<div class="ln" style="top:298px">22945</div>
<div class="ln" style="top:324px">22946</div>
<div class="ln" style="top:350px">22947</div>
<div class="ln" style="top:376px">22948</div>
<div class="ln" style="top:402px">22949</div>
<div class="ln" style="top:428px">22950</div>
<div class="ln" style="top:454px">22951</div>
<div class="ln" style="top:480px">22952</div>
<div class="ln" style="top:506px">22953</div>
<div class="ln" style="top:532px">22954</div>
<div class="ln" style="top:558px">22955</div>
<div class="ln" style="top:584px">22956</div>
<div class="ln" style="top:610px">22957</div>
<div class="ln" style="top:636px">22958</div>
<div class="ln" style="top:662px">22959</div>
<div class="ln" style="top:688px">22960</div>
<div class="ln" style="top:714px">22961</div>
<div class="ln" style="top:740px">22962</div>
<div class="ln" style="top:766px">22963</div>
<div class="ln" style="top:792px">22964</div>
<div class="ln" style="top:818px">22965</div>
<div class="ln" style="top:844px">22966</div>
<div class="ln" style="top:870px">22967</div>
<div class="ln" style="top:896px">22968</div>
<div class="ln" style="top:922px">22969</div>
<div class="ln" style="top:948px">22970</div>
<div class="ln" style="top:974px">22971</div>
<div class="ln" style="top:1000px">22972</div>
<div class="ln" style="top:1026px">22973</div>
<div class="ln" style="top:1052px">22974</div>
<div class="ln" style="top:1078px">22975</div>
<div class="ln" style="top:1104px">22976</div>
<div class="ln" style="top:1130px">22977</div>
<div class="ln" style="top:1156px">22978</div>
<div class="ln" style="top:1182px">22979</div>
  </div>
  <div class="abs" style="left:566px;top:298px;width:2px;height:1200px;background:#4a4949"></div>
  <div class="abs" style="left:568px;top:298px;width:1480px;height:1200px;background:#23262f;overflow:hidden">
    <div class="cl" style="top:-12px">    {</div>
<div class="cl" style="top:14px">        <span class="k">Device</span> (PWRB)</div>
<div class="cl" style="top:40px">        {</div>
<div class="cl" style="top:66px">            <span class="k">Name</span> (_HID, <span class="k">EisaId</span> (<span class="s">&quot;PNP0C0C&quot;</span>) <span class="c">/* Power Button Device */</span>)  <span class="c">// _HID: Hardware ID</span></div>
<div class="cl" style="top:92px">            <span class="k">Name</span> (PBST, <span class="n">0x01</span>)</div>
<div class="cl" style="top:118px">            <span class="k">Method</span> (_STA, <span class="n">0</span>, <span class="m">NotSerialized</span>)  <span class="c">// _STA: Status</span></div>
<div class="cl" style="top:144px">            {</div>
<div class="cl" style="top:170px">                <span class="k">Return</span> (<span class="n">0x0F</span>)</div>
<div class="cl" style="top:196px">            }</div>
<div class="cl" style="top:222px">        }</div>
<div class="cl" style="top:248px">    }</div>
<div class="cl" style="top:274px"></div>
<div class="cl" style="top:300px">    <span class="k">Scope</span> (_SB.PC00.LPC0)</div>
<div class="cl" style="top:326px">    {</div>
<div class="cl" style="top:352px">        <span class="k">Device</span> (EC0)</div>
<div class="cl" style="top:378px">        {</div>
<div class="cl" style="top:404px">            <span class="k">Name</span> (_HID, <span class="k">EisaId</span> (<span class="s">&quot;PNP0C09&quot;</span>) <span class="c">/* Embedded Controller Device */</span>)  <span class="c">// _HID: Hardware ID</span></div>
<div class="cl" style="top:430px">            <span class="k">Name</span> (_CRS, <span class="g">ResourceTemplate</span> ()  <span class="c">// _CRS: Current Resource Settings</span></div>
<div class="cl" style="top:456px">            {</div>
<div class="cl" style="top:482px">                <span class="g">IO</span> (<span class="m">Decode16</span>,</div>
<div class="cl" style="top:508px">                    <span class="n">0x0062</span>,             <span class="c">// Range Minimum</span></div>
<div class="cl" style="top:534px">                    <span class="n">0x0062</span>,             <span class="c">// Range Maximum</span></div>
<div class="cl" style="top:560px">                    <span class="n">0x00</span>,               <span class="c">// Alignment</span></div>
<div class="cl" style="top:586px">                    <span class="n">0x01</span>,               <span class="c">// Length</span></div>
<div class="cl" style="top:612px">                    )</div>
<div class="cl" style="top:638px">                <span class="g">IO</span> (<span class="m">Decode16</span>,</div>
<div class="cl" style="top:664px">                    <span class="n">0x0066</span>,             <span class="c">// Range Minimum</span></div>
<div class="cl" style="top:690px">                    <span class="n">0x0066</span>,             <span class="c">// Range Maximum</span></div>
<div class="cl" style="top:716px">                    <span class="n">0x00</span>,               <span class="c">// Alignment</span></div>
<div class="cl" style="top:742px">                    <span class="n">0x01</span>,               <span class="c">// Length</span></div>
<div class="cl" style="top:768px">                    )</div>
<div class="cl" style="top:794px">            })</div>
<div class="cl" style="top:820px">            <span class="k">Name</span> (_GPE, <span class="n">0x16</span>)  <span class="c">// _GPE: General Purpose Events</span></div>
<div class="cl" style="top:846px">            <span class="k">Name</span> (REGC, <span class="n">0x00</span>)</div>
<div class="cl" style="top:872px">            <span class="k">Method</span> (_REG, <span class="n">2</span>, <span class="m">NotSerialized</span>)  <span class="c">// _REG: Region Availability</span></div>
<div class="cl" style="top:898px">            {</div>
<div class="cl" style="top:924px">                <span class="k">If</span> ((<span class="m">Arg0</span> == <span class="n">0x03</span>))</div>
<div class="cl" style="top:950px">                {</div>
<div class="cl" style="top:976px">                    REGC = <span class="m">Arg1</span></div>
<div class="cl" style="top:1002px">                }</div>
<div class="cl" style="top:1028px">            }</div>
<div class="cl" style="top:1054px"></div>
<div class="cl" style="top:1080px">            <span class="k">Method</span> (_Q01, <span class="n">0</span>, <span class="m">NotSerialized</span>)  <span class="c">// _Qxx: EC Query, xx=0x00-0xFF</span></div>
<div class="cl" style="top:1106px">            {</div>
<div class="cl" style="top:1132px">                \AMW0.AMWN (<span class="n">0xA0040001</span>)</div>
<div class="cl" style="top:1158px">            }</div>
<div class="cl" style="top:1184px"></div>
  </div>
  <div class="abs" style="left:112px;top:1498px;width:364px;height:2px;background:#4d4c4b"></div>
  <div class="abs" style="left:476px;top:1498px;width:1574px;height:2px;background:#878685"></div>


  <!-- annotations -->
  <div class="abs" style="left:1006px;top:696px;width:110px;height:34px;background:#fdfb3d"></div>
  <div class="abs" style="left:1014px;top:702px;white-space:pre;font-family:'Liberation Mono',monospace;font-size:23px;letter-spacing:-0.55px;line-height:26px;color:#000">PNP0C09</div>
  <div class="abs" style="left:621px;top:589px;width:289px;height:36px;border:5px solid #fe0b14"></div>
  <div class="abs" style="left:664px;top:642px;width:194px;height:36px;border:5px solid #fe0b14"></div>
  <div class="abs" style="left:958px;top:587px;white-space:pre;font-size:34px;letter-spacing:-0.45px;line-height:40px;color:#f93b3b">&lt;- Embedded Controller&#8217;s Pathing</div>
  <div class="abs" style="left:961px;top:641px;white-space:pre;font-size:34px;letter-spacing:-0.58px;line-height:40px;color:#f93b3b">&lt;- Embedded Controller&#8217;s Names</div>

  <!-- status bar -->
  <div class="abs" style="left:112px;top:1500px;width:1938px;height:40px;background:#373534"></div>
  <div class="abs" style="left:152px;top:1504px;color:#e6e6e6;font-size:23.5px;line-height:30px;white-space:nowrap">DSDT</div>
  <svg class="abs" style="left:224px;top:1515px" width="9" height="10" viewBox="0 0 9 10"><path d="M0.5 0.5 L8 5 L0.5 9.5Z" fill="#8d8d8d"/></svg>
  <div class="abs" style="left:239px;top:1504px;color:#e6e6e6;font-size:23.5px;line-height:30px;white-space:nowrap">_SB.PC00.LPC0</div>
  <svg class="abs" style="left:428px;top:1515px" width="9" height="10" viewBox="0 0 9 10"><path d="M0.5 0.5 L8 5 L0.5 9.5Z" fill="#8d8d8d"/></svg>
  <div class="abs" style="left:444px;top:1504px;color:#e6e6e6;font-size:23.5px;line-height:30px;white-space:nowrap">EC0</div>
</div></div>
<div id="frame"></div>
</body></html>
